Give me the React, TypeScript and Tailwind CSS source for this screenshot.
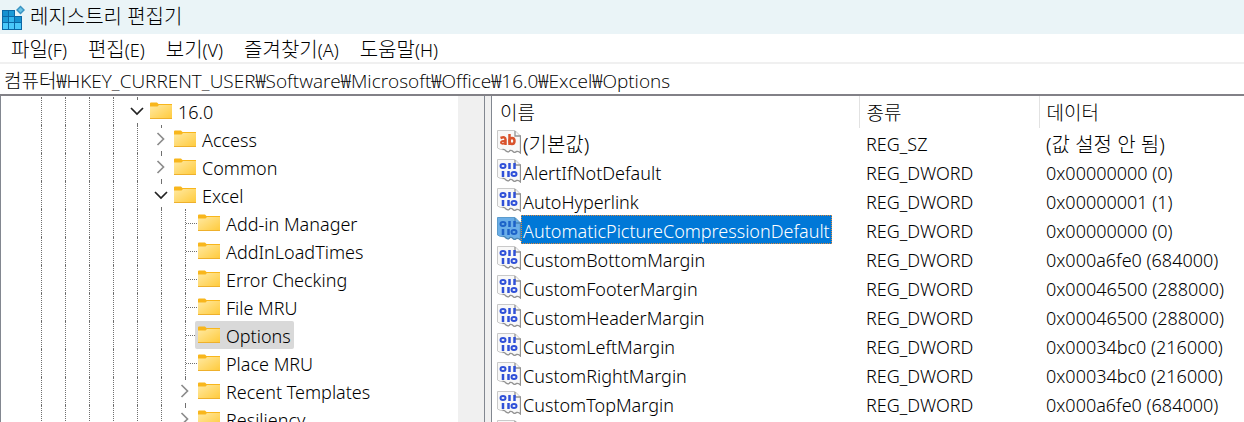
import { useState } from "react";
import clsx from "clsx";

type Expander = "open" | "closed" | "none";

interface TreeNode {
    name: string;
    depth: number;
    expander: Expander;
}

interface RegistryValue {
    name: string;
    type: string;
    data: string;
}

const menus = [
    { label: "파일", hotkey: "F" },
    { label: "편집", hotkey: "E" },
    { label: "보기", hotkey: "V" },
    { label: "즐겨찾기", hotkey: "A" },
    { label: "도움말", hotkey: "H" },
];

const nodes: TreeNode[] = [
    { name: "16.0", depth: 4, expander: "open" },
    { name: "Access", depth: 5, expander: "closed" },
    { name: "Common", depth: 5, expander: "closed" },
    { name: "Excel", depth: 5, expander: "open" },
    { name: "Add-in Manager", depth: 6, expander: "none" },
    { name: "AddInLoadTimes", depth: 6, expander: "none" },
    { name: "Error Checking", depth: 6, expander: "none" },
    { name: "File MRU", depth: 6, expander: "none" },
    { name: "Options", depth: 6, expander: "none" },
    { name: "Place MRU", depth: 6, expander: "none" },
    { name: "Recent Templates", depth: 6, expander: "closed" },
    { name: "Resiliency", depth: 6, expander: "closed" },
];

const values: RegistryValue[] = [
    { name: "(기본값)", type: "REG_SZ", data: "(값 설정 안 됨)" },
    { name: "AlertIfNotDefault", type: "REG_DWORD", data: "0x00000000 (0)" },
    { name: "AutoHyperlink", type: "REG_DWORD", data: "0x00000001 (1)" },
    { name: "AutomaticPictureCompressionDefault", type: "REG_DWORD", data: "0x00000000 (0)" },
    { name: "CustomBottomMargin", type: "REG_DWORD", data: "0x000a6fe0 (684000)" },
    { name: "CustomFooterMargin", type: "REG_DWORD", data: "0x00046500 (288000)" },
    { name: "CustomHeaderMargin", type: "REG_DWORD", data: "0x00046500 (288000)" },
    { name: "CustomLeftMargin", type: "REG_DWORD", data: "0x00034bc0 (216000)" },
    { name: "CustomRightMargin", type: "REG_DWORD", data: "0x00034bc0 (216000)" },
    { name: "CustomTopMargin", type: "REG_DWORD", data: "0x000a6fe0 (684000)" },
    { name: "", type: "", data: "" },
];

function AppIcon() {
    return (
        <svg width="26" height="26" viewBox="0 0 26 26" aria-hidden="true">
            <path d="M2 6h13v6h7v14H2z" fill="#0b68a6" />
            <path d="M3 7h5v5H3z" fill="#1590cf" />
            <path d="M9 7h5v5H9z" fill="#1c9ad6" />
            <path d="M3 13h5v5H3z" fill="#1c9ad6" />
            <path d="M9 13h5v5H9z" fill="#35b6ee" />
            <path d="M15 13h6v5h-6z" fill="#1590cf" />
            <path d="M3 19h5v6H3zM9 19h5v6H9zM15 19h6v6h-6z" fill="#4ac8fa" />
            <path d="M20.500 1.500L25 6l-4.500 4.500L16 6z" fill="#3a93c2" />
            <path d="M20.500 3.500L23 6l-2.500 2.500L18 6z" fill="#6cc4e6" />
        </svg>
    );
}

function FolderIcon() {
    return (
        <svg width="22" height="18" viewBox="0 0 22 18" className="mb-0.5 shrink-0" aria-hidden="true">
            <defs>
                <linearGradient id="folder" x1="0" y1="0" x2="1" y2="1">
                    <stop offset="0" stopColor="#ffe9a2" />
                    <stop offset="1" stopColor="#ffca3a" />
                </linearGradient>
            </defs>
            <path d="M0 1.500Q0 .500 1 .500h6l1.500 1.500H22v4H0z" fill="#f8b61c" />
            <path d="M0 4.500h7.500L9 3h13v14H0z" fill="url(#folder)" />
            <path d="M0 16.500h22" stroke="#eeb02c" />
        </svg>
    );
}

function ValueIcon({ text, selected }: { text: boolean; selected: boolean }) {
    return (
        <svg width="24" height="24" viewBox="0 0 24 24" className="mb-0.5 shrink-0" aria-hidden="true">
            <path
                d="M.500.500h17.500l5.500 5.500v17q-2-2-4-1.500-1.500 1.500-3 .500-1.500-2-3.500-1.500-1.500 2.500-4 .500-1.500-2-3.500-1.500-2 .500-5-1.500z"
                fill={selected ? "#6aaee8" : "#f8f8f8"}
                stroke={selected ? "#5b9bcc" : "#c9c9c9"}
            />
            <path
                d="M18 1v5h5.500v17q-2-2-4-1.500-1.500 1.500-3 .500-1.500-2-3.500-1.500-1.500 2.500-4 .500-1.500-2-3.500-1.500"
                fill="none"
                stroke={selected ? "#4c86b4" : "#929292"}
                strokeWidth="1.300"
            />
            {text ? (
                <g fill="none" stroke="#d9532c" strokeWidth="2.500">
                    <path d="M3.500 8q5-2 5 1.500V15" />
                    <path d="M8.500 11q-4.500-.500-4.500 1.500t4.500.500" strokeWidth="2" />
                    <path d="M12.500 4v11" />
                    <ellipse cx="15" cy="11" rx="2.500" ry="3" />
                </g>
            ) : (
                <g fill="none" stroke={selected ? "#1c62c8" : "#2f50d8"}>
                    <ellipse cx="6" cy="7" rx="2.500" ry="2" strokeWidth="2" />
                    <path d="M12.500 4v6M17.500 4v6M6 12v6M11.500 12v6" strokeWidth="2.500" />
                    <ellipse cx="17" cy="15" rx="2.500" ry="2" strokeWidth="2" />
                </g>
            )}
        </svg>
    );
}

function Guide({ elbow }: { elbow?: boolean }) {
    return (
        <span className="flex h-full w-6 shrink-0 items-center pl-3">
            <span className="h-full border-l border-dotted border-[#707070]" />
            {elbow && <span className="grow border-t border-dotted border-[#707070]" />}
        </span>
    );
}

function ExpanderButton({ name, open, onClick }: { name: string; open: boolean; onClick: () => void }) {
    return (
        <button
            type="button"
            aria-label={name}
            aria-expanded={open}
            onClick={onClick}
            className="flex h-full w-6 shrink-0 flex-col items-center justify-between"
        >
            <span className="h-0.5 border-l border-dotted border-[#707070]" />
            <svg width="14" height="14" viewBox="0 0 14 14" fill="none" strokeWidth="1.700">
                {open ? (
                    <path d="M1 4l6 6 6-6" stroke="#222222" />
                ) : (
                    <path d="M3.500 1l6 6-6 6" stroke="#8c8c8c" />
                )}
            </svg>
            <span className="h-0.5 border-l border-dotted border-[#707070]" />
        </button>
    );
}

export default function App() {
    const [address, setAddress] = useState("컴퓨터₩HKEY_CURRENT_USER₩Software₩Microsoft₩Office₩16.0₩Excel₩Options");
    const [selectedKey, setSelectedKey] = useState("Options");
    const [selectedValue, setSelectedValue] = useState("AutomaticPictureCompressionDefault");
    const [tree, setTree] = useState(nodes);

    const toggle = (name: string) => {
        setTree(tree.map((n) => (n.name === name ? { ...n, expander: n.expander === "open" ? "closed" : "open" } : n)));
    };

    return (
        <div className="flex h-screen flex-col overflow-hidden bg-white font-['Noto_Sans','Noto_Sans_CJK_KR',sans-serif] text-[18px] leading-7 font-[350] text-black">
            {/* Title bar */}
            <header className="flex h-[34px] shrink-0 items-center gap-1 bg-[#eaf4f7]">
                <AppIcon />
                <h1 className="text-[20px] font-light">레지스트리 편집기</h1>
            </header>

            {/* Menu */}
            <nav className="flex h-[30px] shrink-0 items-center gap-[21px] border-b-2 border-[#f0f0f0] px-[11px] pt-1">
                {menus.map((menu) => (
                    <button key={menu.hotkey} type="button">
                        <span className="text-[20px] font-light">{menu.label}</span>({menu.hotkey})
                    </button>
                ))}
            </nav>

            {/* Address bar */}
            <input
                aria-label="주소"
                value={address}
                onChange={(e) => setAddress(e.target.value)}
                className="h-8 w-full shrink-0 border-b-2 border-[#828187] pt-0.5 pl-1 font-['Open_Sans','Noto_Sans_CJK_KR',sans-serif] text-[19px] font-light outline-none"
            />

            <div className="flex min-h-0 grow">
                {/* Key tree */}
                <div className="flex w-[485px] shrink-0 overflow-hidden border-x border-[#828790]">
                    <ul role="tree" className="min-w-0 grow pt-px pl-7">
                        {tree.map((node) => (
                            <li key={node.name} role="treeitem" aria-selected={node.name === selectedKey} className="flex h-7">
                                {Array.from({ length: node.depth }, (_, i) => (
                                    <Guide key={i} />
                                ))}
                                {node.expander === "none" ? (
                                    <Guide elbow />
                                ) : (
                                    <ExpanderButton
                                        name={node.name}
                                        open={node.expander === "open"}
                                        onClick={() => toggle(node.name)}
                                    />
                                )}
                                <button
                                    type="button"
                                    onClick={() => setSelectedKey(node.name)}
                                    className={clsx(
                                        "-ml-0.5 flex items-center gap-1.5 rounded-xs px-[3px] pt-0.5",
                                        node.name === selectedKey && "bg-[#d9d9d9]"
                                    )}
                                >
                                    <FolderIcon />
                                    {node.name}
                                </button>
                            </li>
                        ))}
                    </ul>
                    <div className="w-[26px] shrink-0 bg-[#f0f0f0]" />
                </div>

                {/* Splitter */}
                <div className="w-1.5 shrink-0 bg-[#f0f0f0]" />

                {/* Values */}
                <div className="min-w-0 grow overflow-hidden border-l border-[#828790]">
                    <table className="w-full table-fixed border-collapse text-left whitespace-nowrap">
                        <colgroup>
                            <col className="w-[367px]" />
                            <col className="w-[180px]" />
                            <col />
                        </colgroup>
                        <thead className="text-[19px]">
                            <tr className="h-8">
                                <th className="border-r border-[#e2e2e2] p-0 pt-0.5 pl-2 font-light">이름</th>
                                <th className="border-r border-[#e2e2e2] p-0 pt-0.5 pl-[7px] font-light">종류</th>
                                <th className="p-0 pt-0.5 pl-[7px] font-light">데이터</th>
                            </tr>
                        </thead>
                        <tbody>
                            {values.map((value) => (
                                <tr
                                    key={value.name}
                                    className="h-[29px] leading-[23px]"
                                    onClick={() => setSelectedValue(value.name)}
                                >
                                    <td className="p-0 pl-[5px]">
                                        <div className="flex items-center">
                                            <ValueIcon
                                                text={value.type === "REG_SZ"}
                                                selected={value.name === selectedValue}
                                            />
                                            <span
                                                className={clsx(
                                                    "border border-dotted pt-1 pr-px pl-px",
                                                    value.type === "REG_SZ" && "text-[20px] font-light",
                                                    value.name === selectedValue
                                                        ? "border-[#e08a3c] bg-[#0078d7] text-white"
                                                        : "border-transparent"
                                                )}
                                            >
                                                {value.name}
                                            </span>
                                        </div>
                                    </td>
                                    <td className="p-0 pt-1 pl-[7px]">{value.type}</td>
                                    <td
                                        className={clsx(
                                            "p-0 pt-1 pl-[7px]",
                                            value.type === "REG_SZ" && "text-[20px] font-light"
                                        )}
                                    >
                                        {value.data}
                                    </td>
                                </tr>
                            ))}
                        </tbody>
                    </table>
                </div>
            </div>
        </div>
    );
}
